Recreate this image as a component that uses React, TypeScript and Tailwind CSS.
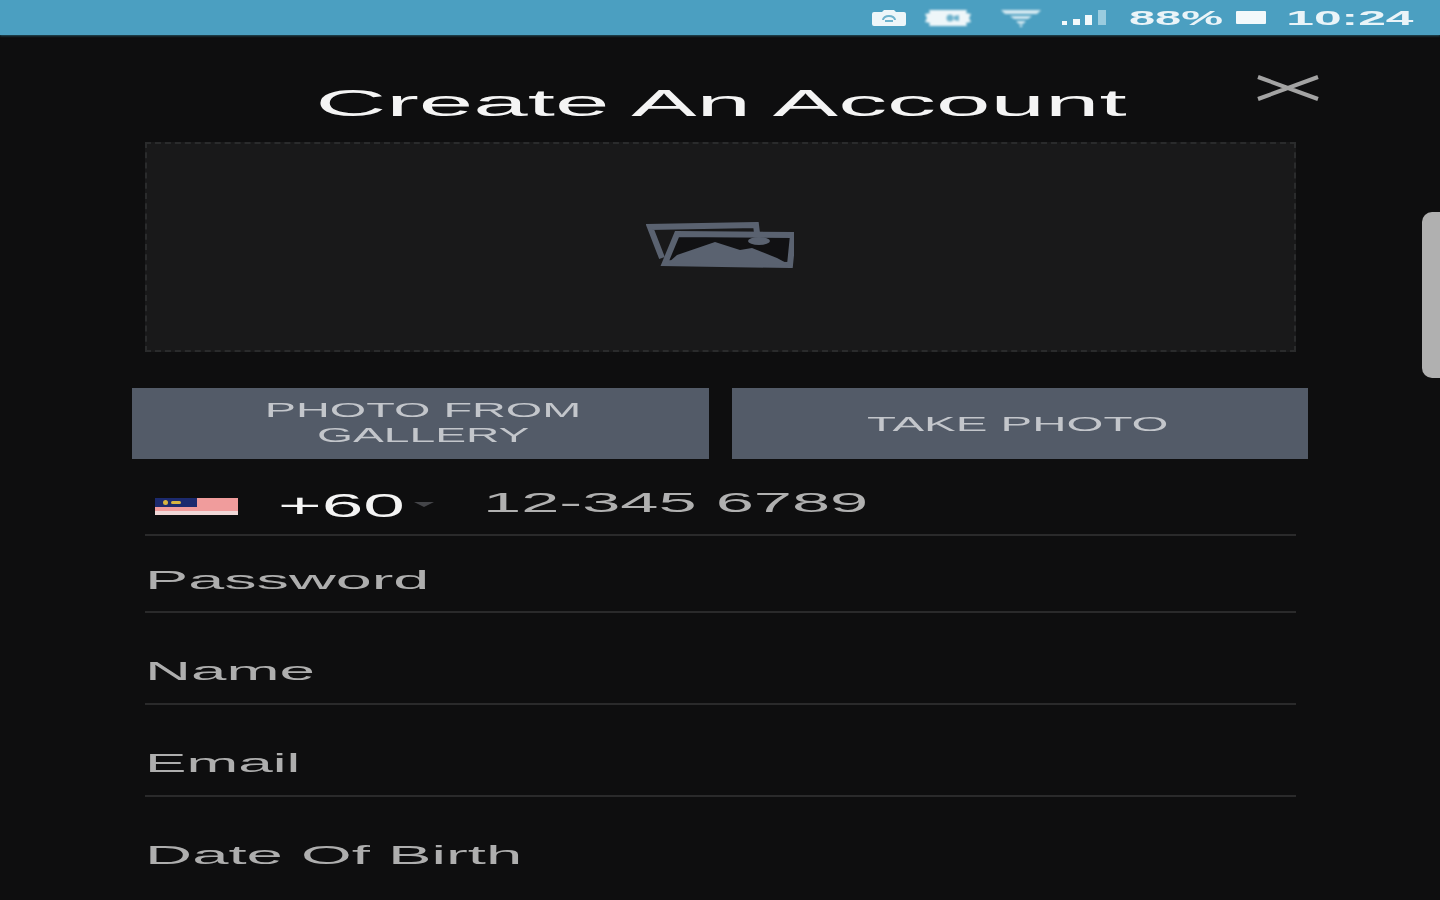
export default function App() {
  return (
    <div className="relative h-[900px] w-[1440px] overflow-hidden bg-[#0e0e0f] font-['Liberation_Sans',Arial,sans-serif]">
      {/* status bar */}
      <div className="flex h-[35px] items-center justify-end bg-[#4b9fc1] pr-[28px] text-[#eaf4f8] shadow-[0_1px_2px_#22505f]">
        <svg viewBox="0 0 34 16" className="h-[16px] w-[34px] blur-[0.7px]">
          <path d="M2 2h8l2-2h10l2 2h8a2 2 0 0 1 2 2v10a2 2 0 0 1-2 2H2a2 2 0 0 1-2-2V4a2 2 0 0 1 2-2z" fill="#eef6f9" />
          <path d="M11 10a6 4 0 0 1 12 0M13 11h8" fill="none" stroke="#6fb3cd" strokeWidth="2" />
        </svg>
        <svg viewBox="0 0 46 16" className="ml-[19px] h-[16px] w-[46px] blur-[0.8px]">
          <path d="M4 0h38l-1 3 5 1-2 4 2 4-5 1 1 3H4l1-3-5-1 2-4-2-4 5-1z" fill="#eef6f9" />
          <circle cx="25" cy="8" r="3.5" fill="#6fb3cd" />
          <path d="M29 6l5-1v6l-5-1z" fill="#6fb3cd" />
        </svg>
        <svg viewBox="0 0 40 18" className="ml-[30px] h-[18px] w-[40px] blur-[0.9px]">
          <path d="M0 1h40l-4 4H4zM9 7h22l-4 3H13zM15 12h10l-3 3h-4z" fill="#d5e9f1" />
          <circle cx="20" cy="17" r="1.3" fill="#d5e9f1" />
        </svg>
        <svg viewBox="0 0 46 16" className="ml-[21px] h-[16px] w-[46px] blur-[0.6px]">
          <rect x="0" y="11" width="5" height="4" fill="#f3f9fb" />
          <rect x="11" y="9" width="7" height="6" fill="#f3f9fb" />
          <rect x="23" y="5" width="7" height="10" fill="#f3f9fb" />
          <rect x="36" y="0" width="8" height="15" fill="#9accdf" />
        </svg>
        <div className="ml-[22px] flex w-[92px] justify-center text-[21px] font-bold leading-none blur-[0.7px]">
          <span className="inline-block scale-x-[2.24] whitespace-nowrap">88%</span>
        </div>
        <div className="ml-[14px] h-[13px] w-[30px] rounded-[1px] bg-[#f3f9fb] blur-[0.5px]" />
        <div className="ml-[21px] flex w-[125px] justify-center text-[21px] font-bold leading-none blur-[0.7px]">
          <span className="inline-block scale-x-[2.37] whitespace-nowrap">10:24</span>
        </div>
      </div>

      {/* title */}
      <div className="grid h-[107px] grid-cols-[1fr_auto_1fr] items-start">
        <div />
        <h1 className="mt-[47px] pl-[3px] text-[36px] font-normal leading-[44px] text-[#f4f4f4] blur-[0.6px]">
          <span className="inline-block scale-x-[2.72] whitespace-nowrap">Create An Account</span>
        </h1>
        <svg viewBox="0 0 64 26" className="mt-[40px] mr-[120px] h-[26px] w-[64px] justify-self-end blur-[0.7px]">
          <path d="M2 2l60 22M62 2L2 24" stroke="#a3a3a3" strokeWidth="4" fill="none" />
        </svg>
      </div>

      <div className="flex flex-col pl-[145px] pr-[144px]">
        {/* photo placeholder */}
        <div className="flex h-[210px] items-center justify-center border-2 border-dashed border-[#2a2b2c] bg-[#19191a]">
          <svg viewBox="0 0 148 46" className="ml-[-1px] mt-[-4px] h-[46px] w-[148px] blur-[0.7px]">
            <path d="M16 36L4 5l106-2 1 8" fill="none" stroke="#5a6270" strokeWidth="6" />
            <path d="M31 12l116 1-3 30-125-2z" fill="#111113" stroke="#5a6270" strokeWidth="6" />
            <path d="M22 41l9-8 38-13 25 8 12-2 25 10 13 7z" fill="#5a6270" />
            <ellipse cx="113" cy="19" rx="11" ry="4" fill="#5a6270" />
          </svg>
        </div>

        {/* buttons */}
        <div className="ml-[-13px] mr-[-12px] mt-[36px] flex gap-[23px]">
          <button className="flex h-[71px] flex-1 flex-col items-center justify-center bg-[#535b68] pb-[4px] pl-[5px] text-[21px] leading-[25px] text-[#c3c6cb] blur-[0.5px]">
            <span className="inline-block scale-x-[2.23] whitespace-nowrap">PHOTO FROM</span>
            <span className="inline-block scale-x-[2.2] whitespace-nowrap">GALLERY</span>
          </button>
          <button className="flex h-[71px] flex-1 items-center justify-center bg-[#535b68] pr-[4px] text-[21px] leading-[25px] text-[#c3c6cb] blur-[0.5px]">
            <span className="inline-block scale-x-[2.26] whitespace-nowrap">TAKE PHOTO</span>
          </button>
        </div>

        {/* phone */}
        <div className="flex h-[77px] items-center border-b-2 border-[#2a2a2b] pt-[12px]">
          <div className="ml-[10px] mt-[8px] flex h-[17px] w-[83px] flex-col bg-[#f09c9c] blur-[0.5px]">
            <div className="flex h-[9px] w-[42px] items-center gap-[3px] bg-[#1c2a6e] pl-[8px]">
              <div className="h-[5px] w-[5px] rounded-full bg-[#d8b440]" />
              <div className="h-[3px] w-[10px] rounded-full bg-[#d8b440]" />
            </div>
            <div className="mt-auto h-[4px] bg-[#f0d8d8]" />
          </div>
          <div className="ml-[40px] mt-[4px] w-[124px] text-[34px] leading-none text-[#f4f4f4] blur-[0.5px]">
            <span className="inline-block origin-left scale-x-[2.2] whitespace-nowrap">+60</span>
          </div>
          <div className="ml-[12px] mt-[4px] h-0 w-0 border-x-[10px] border-t-[5px] border-x-transparent border-t-[#444549] blur-[0.5px]" />
          <div className="ml-[49px] text-[28px] leading-none text-[#b0b0b0] blur-[0.5px]">
            <span className="inline-block origin-left scale-x-[2.45] whitespace-nowrap">12-345 6789</span>
          </div>
        </div>

        {/* fields */}
        <div className="flex h-[77px] items-end border-b-2 border-[#2a2a2b] pb-[17px] text-[26px] leading-[28px] text-[#aeaeae] blur-[0.5px]">
          <span className="inline-block origin-left scale-x-[2.49] whitespace-nowrap">Password</span>
        </div>
        <div className="flex h-[92px] items-end border-b-2 border-[#2a2a2b] pb-[18px] text-[26px] leading-[28px] text-[#aeaeae] blur-[0.5px]">
          <span className="inline-block origin-left scale-x-[2.45] whitespace-nowrap">Name</span>
        </div>
        <div className="flex h-[92px] items-end border-b-2 border-[#2a2a2b] pb-[18px] text-[26px] leading-[28px] text-[#aeaeae] blur-[0.5px]">
          <span className="inline-block origin-left scale-x-[2.39] whitespace-nowrap">Email</span>
        </div>
        <div className="flex h-[92px] items-end pb-[20px] text-[26px] leading-[28px] text-[#aeaeae] blur-[0.5px]">
          <span className="inline-block origin-left scale-x-[2.51] whitespace-nowrap">Date Of Birth</span>
        </div>
      </div>

      {/* edge handle */}
      <div className="absolute right-0 top-[212px] h-[166px] w-[18px] rounded-l-[10px] bg-[#b0b0b0] blur-[0.7px]" />
    </div>
  );
}
